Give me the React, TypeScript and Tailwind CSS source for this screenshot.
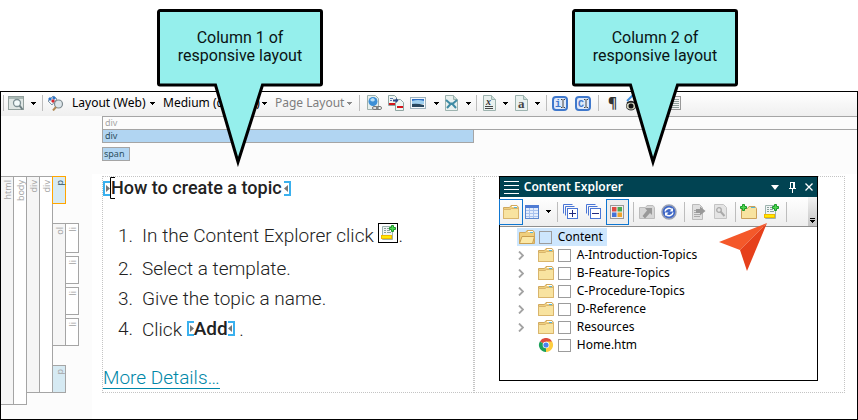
import React from 'react';
import type { ReactNode } from 'react';

const UI = "font-['Noto_Sans','Open_Sans',sans-serif]";

function Caret({ dim = false }: { dim?: boolean }) {
  return (
    <svg width="5" height="3" viewBox="0 0 5 3" className="shrink-0" shapeRendering="crispEdges">
      <path d="M0 0h5v1H4v1H3v1H2V2H1V1H0z" fill={dim ? '#8a8a8a' : '#000'} />
    </svg>
  );
}

function Sep({ className = '' }: { className?: string }) {
  return <span className={`h-4 w-px shrink-0 bg-[#bdbdbd] ${className}`} />;
}

function Tool({ label, className = '', children }: { label: string; className?: string; children: ReactNode }) {
  return (
    <button type="button" aria-label={label} className={`flex shrink-0 items-center justify-center ${className}`}>
      {children}
    </button>
  );
}

function Picker({ label, value, className, dim = false }: { label: string; value: string; className: string; dim?: boolean }) {
  return (
    <label className={`flex h-5 shrink-0 items-center ${className}`}>
      <select
        aria-label={label}
        defaultValue={value}
        disabled={dim}
        className={`min-w-0 grow appearance-none bg-transparent p-0 text-xs opacity-100 ${dim ? 'text-[#7d7d7d]' : 'text-black'}`}
      >
        <option>{value}</option>
      </select>
      <Caret dim={dim} />
    </label>
  );
}

function PageShape({ children }: { children?: ReactNode }) {
  return (
    <svg width="13" height="16" viewBox="0 0 13 16">
      <path d="M.5.500h8l4 4v11H.5z" fill="#e9f1ef" stroke="#9db3af" />
      <path d="M8.500.5v4h4" fill="#c9dcd8" stroke="#9db3af" />
      {children}
    </svg>
  );
}

function CursorBadge({ letter }: { letter: string }) {
  return (
    <svg width="16" height="15" viewBox="0 0 16 15">
      <rect x="1" y="1" width="14" height="13" rx="3" fill="#dfeafa" stroke="#3f78cc" strokeWidth="2" />
      <text x="3" y="11" fontSize="10" fontWeight="700" fill="#3f78cc" fontFamily="Liberation Mono, monospace">
        {letter}
      </text>
      <path d="M9 3.500h1.500m1 0h1.500M11 4v7M9 11.500h1.500m1 0h1.500" stroke="#444" fill="none" />
    </svg>
  );
}

function MainToolbar() {
  return (
    <div className={`flex h-6 items-center overflow-hidden bg-linear-to-b from-white to-[#efefef] pb-[2px] pl-[2px] ${UI}`}>
      <Sep />
      <Tool label="Preview" className="ml-1 gap-[6px]">
        <svg width="17" height="16" viewBox="0 0 17 16">
          <rect x=".5" y="1.500" width="15" height="13" fill="#dfe6e4" stroke="#93a09d" />
          <path d="M1 2h14v2H1z" fill="#a9b8b4" />
          <circle cx="9" cy="8" r="3.500" fill="#f2fafa" stroke="#7d8f93" strokeWidth="1.300" />
          <path d="M11.500 10.500l3 4" stroke="#6e7f83" strokeWidth="2" />
        </svg>
        <Caret />
      </Tool>
      <Sep className="ml-[6px]" />
      <Tool label="Inspect styles" className="ml-1">
        <svg width="17" height="16" viewBox="0 0 17 16">
          <path d="M1 6L6 1l4 3-5 6z" fill="#eef3f8" stroke="#8196a8" />
          <path d="M1 4l2-2 2 2-2 2z" fill="#2e75c8" />
          <path d="M5 3l2-2 2 2-2 2z" fill="#2e75c8" />
          <path d="M4 6l2-2 2 2-2 2z" fill="#d6262b" />
          <circle cx="11.500" cy="9" r="4" fill="#dde6ea" stroke="#7f8b90" strokeWidth="1.200" />
          <path d="M9 12l-3 3.500" stroke="#b08a55" strokeWidth="2" />
        </svg>
      </Tool>
      <Picker label="Layout mode" value="Layout (Web)" className="ml-2 w-[83px]" />
      <Picker label="Medium" value="Medium (default)" className="ml-[8px] w-[104px]" />
      <Picker label="Page layout" value="Page Layout" className="ml-[8px] w-[77px]" dim />
      <Sep className="ml-[7px]" />
      <Tool label="Insert hyperlink" className="ml-[7px]">
        <svg width="15" height="16" viewBox="0 0 15 16">
          <path d="M.5.500h8l3 3v11H.5z" fill="#e6efed" stroke="#9fb0ac" />
          <circle cx="6" cy="6.500" r="4.500" fill="#3c8fd6" />
          <path d="M3 5q3-4 5 0-2 3-5 0" fill="#b9e0f7" />
          <rect x="5.500" y="11.500" width="5" height="3" rx="1.500" fill="#ddd" stroke="#777" />
          <rect x="9.500" y="11.500" width="5" height="3" rx="1.500" fill="none" stroke="#777" />
        </svg>
      </Tool>
      <Tool label="Insert cross-reference" className="ml-[6px]">
        <svg width="16" height="16" viewBox="0 0 16 16">
          <path d="M.5.500h6l2 2v8h-8z" fill="#eef5f3" stroke="#8fa5a2" />
          <path d="M7.500 4.500h5l3 3v8h-8z" fill="#eef5f3" stroke="#8fa5a2" />
          <path d="M2 3.500h3M2 5.500h2" stroke="#5b78ae" />
          <path d="M1 9h6M9 12h6" stroke="#d4151b" strokeWidth="2" />
          <path d="M5 4.500h3V3l2.500 2.500L8 8V6.500H5z" fill="#2f4a8a" />
        </svg>
      </Tool>
      <Tool label="Insert image" className="ml-[6px] gap-2">
        <svg width="16" height="12" viewBox="0 0 16 12">
          <rect x=".5" y=".5" width="15" height="11" fill="#f4f8fb" stroke="#9fb3bd" />
          <path d="M2 2h12v3H2z" fill="#2f6fc4" />
          <path d="M2 4q6-2 12 0v3H2z" fill="#9fd0ef" />
          <path d="M2 7q5-1 12 1v2H2z" fill="#27475f" />
        </svg>
        <Caret />
      </Tool>
      <Tool label="Insert variable" className="ml-[6px] gap-2">
        <PageShape>
          <path d="M1 5l4 3.500h3L12 5M2 13l4-4.500h1l4 4.500" stroke="#3f8ba4" strokeWidth="2" fill="none" />
        </PageShape>
        <Caret />
      </Tool>
      <Sep className="ml-[5px]" />
      <Tool label="Insert snippet" className="ml-[6px] gap-[7px]">
        <PageShape>
          <text x="3" y="10" fontSize="10" fontWeight="700" fontStyle="italic" fill="#333" fontFamily="Liberation Serif, serif">x</text>
          <path d="M2 11.500h8M2 13.500h8" stroke="#444" />
        </PageShape>
        <Caret />
      </Tool>
      <Tool label="Insert character" className="ml-[7px] gap-[7px]">
        <PageShape>
          <text x="3" y="13" fontSize="13" fontWeight="700" fill="#444" fontFamily="Liberation Serif, serif">a</text>
        </PageShape>
        <Caret />
      </Tool>
      <Sep className="ml-[6px]" />
      <Tool label="Insert index marker" className="ml-[5px]"><CursorBadge letter="i" /></Tool>
      <Tool label="Insert concept marker" className="ml-[7px]"><CursorBadge letter="C" /></Tool>
      <Sep className="ml-[7px]" />
      <Tool label="Show marks" className="ml-2 w-[11px] text-sm font-bold text-[#333]">¶</Tool>
      <Tool label="Show tags" className="ml-2">
        <svg width="16" height="16" viewBox="0 0 16 16">
          <path d="M1 6l6-6" stroke="#3d8fe0" strokeWidth="2" />
          <ellipse cx="5" cy="11" rx="5" ry="4" fill="#cfcfbb" stroke="#333" />
          <circle cx="5" cy="11" r="2.500" fill="#111" />
          <path d="M1 8q4-3 8 0" stroke="#222" strokeWidth="1.500" fill="none" />
        </svg>
      </Tool>
      <Tool label="Show list" className="ml-[26px]">
        <svg width="13" height="14" viewBox="0 0 13 14">
          <rect x=".5" y=".5" width="12" height="13" fill="#f4f4f4" stroke="#999" />
          <path d="M2 3.500h9M2 5.500h9M2 7.500h9M2 9.500h9M2 11.500h9" stroke="#8fa09c" />
        </svg>
      </Tool>
    </div>
  );
}

function StructureBars() {
  return (
    <div className={`h-[58px] bg-[#fcfcfc] pl-[101px] text-[9px] leading-3 ${UI}`}>
      <div className="h-[13px] border-t border-l border-[#a5a5a5] pl-[2px] text-[#a5a5a5]">div</div>
      <div className="border-t border-[#a5a5a5]">
        <div className="h-[13px] w-1/2 max-w-[372px] border-r border-b border-l border-[#a5a5a5] bg-[#b1d5f2] pl-[2px] text-[#2d5061]">div</div>
      </div>
      <div className="mt-1 h-[14px] w-7 border border-[#a5a5a5] bg-[#b1d5f2] pl-px text-[#2d5061]">span</div>
    </div>
  );
}

function VText({ children }: { children: ReactNode }) {
  return <span className="block rotate-180 text-right [writing-mode:vertical-rl]">{children}</span>;
}

const railBox = 'flex items-start justify-center border-[#a5a5a5] pt-[3px]';

function StructureRail() {
  return (
    <div className={`flex w-[91px] shrink-0 items-start bg-[#fcfcfc] pt-[2px] text-[9px] leading-[11px] text-[#a5a5a5] ${UI}`}>
      <div className={`${railBox} h-[229px] w-[13px] border-y border-r bg-[#f6f6f6]`}><VText>html</VText></div>
      <div className={`${railBox} h-[229px] w-[13px] border-y border-r bg-white`}><VText>body</VText></div>
      <div className={`${railBox} h-[217px] w-[13px] border-y border-r bg-[#f6f6f6]`}><VText>div</VText></div>
      <div className={`${railBox} h-[217px] w-[13px] border-y border-r bg-white`}><VText>div</VText></div>
      <div className="-ml-px flex flex-col items-start">
        <div className="flex h-7 w-[14px] items-start justify-center border border-[#ffa500] bg-[#d6eaf3] pt-[3px] text-[#2d5061]"><VText>p</VText></div>
        <div className="mt-[19px] flex">
          <div className={`${railBox} h-[123px] w-[14px] border bg-[#f6f6f6]`}><VText>ol</VText></div>
          <div className="-ml-px flex flex-col gap-[3px]">
            <div className={`${railBox} h-[30px] w-[14px] border bg-white`}><VText>li</VText></div>
            <div className={`${railBox} h-7 w-[14px] border bg-white`}><VText>li</VText></div>
            <div className={`${railBox} h-7 w-[14px] border bg-white`}><VText>li</VText></div>
            <div className={`${railBox} h-7 w-[14px] border bg-white`}><VText>li</VText></div>
          </div>
        </div>
        <div className={`${railBox} mt-[19px] h-7 w-[14px] border bg-[#d6eaf3]`}><VText>p</VText></div>
      </div>
    </div>
  );
}

function Marker({ side }: { side: 'open' | 'close' }) {
  return (
    <svg width="7" height="15" viewBox="0 0 7 15" className="shrink-0">
      {side === 'open' ? (
        <>
          <path d="M7 1H1v13h6" fill="none" stroke="#3ab0ee" strokeWidth="2" />
          <path d="M3 4l4 3.500L3 11z" fill="#777" />
        </>
      ) : (
        <>
          <path d="M0 1h6v13H0" fill="none" stroke="#3ab0ee" strokeWidth="2" />
          <path d="M4 4L0 7.500 4 11z" fill="#777" />
        </>
      )}
    </svg>
  );
}

function NewTopicIcon() {
  return (
    <svg width="16" height="16" viewBox="0 0 16 16">
      <path d="M2.500 1.500h10v13h-10z" fill="#f0f5f4" stroke="#9db3af" />
      <path d="M4 3.500h2m1 0h2M4 5.500h2m1 0h3M4 7.500h2m1 0h4" stroke="#8aa09c" />
      <rect x="1.500" y="10.500" width="10" height="3" fill="#ffe900" stroke="#f0b800" />
      <path d="M11.500.5h2v2h2v2h-2v2h-2v-2h-2v-2h2z" fill="#4fd64f" stroke="#1c9a2b" />
    </svg>
  );
}

function Step({ n, children }: { n: number; children: ReactNode }) {
  return (
    <li className="flex h-[30px] whitespace-nowrap first:h-[34px] first:pt-px">
      <span className="w-6 shrink-0">{n}.</span>
      <span>{children}</span>
    </li>
  );
}

function TopicColumn() {
  return (
    <section className="h-[217px] overflow-hidden border border-dotted border-[#c4c4c4] font-['Roboto',sans-serif] text-[#222]">
      <h1 className="flex h-[22px] items-center text-[18px] leading-[22px] font-medium whitespace-nowrap">
        <Marker side="open" />
        <svg width="5" height="22" viewBox="0 0 5 22" className="-mr-[4px] shrink-0">
          <path d="M5 .5H.5v21H5" fill="none" stroke="#000" />
        </svg>
        How to create a topic
        <span className="ml-[2px]"><Marker side="close" /></span>
      </h1>
      <ol className="mt-[21px] pl-[15px] text-[19px] leading-[30px] font-light">
        <Step n={1}>
          In the Content Explorer click{' '}
          <span className="inline-block border border-black bg-white p-px align-[-1px] leading-none"><NewTopicIcon /></span>.
        </Step>
        <Step n={2}>Select a template.</Step>
        <Step n={3}>Give the topic a name.</Step>
        <Step n={4}>
          Click{' '}
          <span className="inline-flex items-center leading-[29px] font-medium"><Marker side="open" />Add<Marker side="close" /></span>{' '}.
        </Step>
      </ol>
      <p className="mt-[21px] text-[19px] leading-[25px] font-light">
        <a href="#details" className="inline-block h-6 border-b border-[#0087a8] text-[#0087a8]">More Details…</a>
      </p>
    </section>
  );
}

function Folder({ open = false }: { open?: boolean }) {
  return (
    <svg width="16" height="14" viewBox="0 0 16 14" className="shrink-0">
      <path d="M.5 13.500v-11h6l1.500-2h6l1.500 2v11z" fill="#efcf7e" stroke="#d0a85e" />
      <path d="M9 1.500h5" stroke="#fff" />
      <path d="M11 2.500h3" stroke="#54b5d8" />
      {open ? (
        <path d="M.5 13.500L3 6.500h12.500l-2 7z" fill="#fbe8a6" stroke="#c99f50" />
      ) : (
        <path d="M.5 13.500v-9h6.500l1.500-1h7v10z" fill="#f8e3a0" stroke="#d9b56c" />
      )}
    </svg>
  );
}

function Stack({ plus }: { plus: boolean }) {
  return (
    <svg width="15" height="15" viewBox="0 0 15 15">
      <path d="M.5 9.500v-9h9M2.500 11.500v-9h9" fill="none" stroke="#4a76d6" />
      <rect x="4.500" y="4.500" width="10" height="10" fill="#fff" stroke="#4a76d6" />
      <path d={plus ? 'M6 9.500h7M9.500 6v7' : 'M6 9.500h7'} stroke="#222a80" />
    </svg>
  );
}

function ExplorerToolbar() {
  return (
    <div className="flex h-[30px] items-center border-b border-[#8f8f8f] bg-linear-to-b from-white to-[#eee]">
      <Tool label="Show folders" className="-ml-px h-[26px] w-6 border border-[#0f76d0]"><Folder /></Tool>
      <Tool label="View" className="ml-[2px] gap-[7px]">
        <svg width="14" height="14" viewBox="0 0 14 14">
          <rect x=".5" y=".5" width="13" height="13" fill="#e4edfc" stroke="#5b86cf" />
          <path d="M0 0h14v3H0z" fill="#4f7cd4" />
          <path d="M1 5.500h12M1 8.500h12M1 11.500h12M4.500 3v10M8.500 3v10" stroke="#a9c2ee" />
        </svg>
        <Caret />
      </Tool>
      <Sep className="ml-[6px] h-5" />
      <Tool label="Expand all" className="ml-[5px]"><Stack plus /></Tool>
      <Tool label="Collapse all" className="ml-2"><Stack plus={false} /></Tool>
      <Tool label="Show files" className="ml-[5px] h-[26px] w-[23px] border border-[#0f76d0] bg-[#eeeeee]">
        <svg width="14" height="14" viewBox="0 0 14 14">
          <rect x=".5" y=".5" width="13" height="13" fill="#efefef" stroke="#999" />
          <path d="M2 2h4.500v4.500H2z" fill="#dd4b42" />
          <path d="M7.500 2H12v4.500H7.500z" fill="#4aa84f" />
          <path d="M2 7.500h4.500V12H2z" fill="#4472d6" />
          <path d="M7.500 7.500H12V12H7.500z" fill="#efa42c" />
        </svg>
      </Tool>
      <Sep className="ml-1 h-5" />
      <Tool label="Move up" className="ml-[5px]">
        <svg width="16" height="14" viewBox="0 0 16 14">
          <path d="M.5 13.500v-11h6l1.500-2h6l1.500 2v11z" fill="#d6d6d6" stroke="#bcbcbc" />
          <path d="M6 3h7v7l-2-2-5 5.500L3.500 11 8 5.500z" fill="#999" />
        </svg>
      </Tool>
      <Tool label="Refresh" className="ml-[6px]">
        <svg width="16" height="16" viewBox="0 0 16 16">
          <circle cx="8" cy="8" r="7" fill="#3f68c8" stroke="#98a0b4" strokeWidth="1.500" />
          <path d="M4 7.500C4.500 4.500 8.500 3 11 5.500M12 8.500c-.5 3-4.500 4.500-7 2" fill="none" stroke="#fff" strokeWidth="1.500" />
          <path d="M12 4v3.500H8.500zM4 12V8.500h3.500z" fill="#fff" />
        </svg>
      </Tool>
      <Sep className="ml-[7px] h-5" />
      <Tool label="Open" className="ml-[6px]">
        <svg width="15" height="16" viewBox="0 0 15 16">
          <path d="M1.500.500h7l3 3v12h-10z" fill="#e0e0e0" stroke="#bbb" />
          <path d="M3 6.500h6M3 8.500h6M3 10.500h6M3 12.500h6" stroke="#aaa" />
          <path d="M5 5h4V2.500L14.500 7 9 11.500V9H5z" fill="#999" />
        </svg>
      </Tool>
      <Tool label="Properties" className="ml-2">
        <svg width="13" height="15" viewBox="0 0 13 15">
          <path d="M.5.500h9l3 3v11H.5z" fill="#e4e4e4" stroke="#c4c4c4" />
          <circle cx="5" cy="6" r="2.300" fill="none" stroke="#aaa" strokeWidth="1.300" />
          <path d="M6.500 7.500l4 4.500" stroke="#aaa" strokeWidth="2" />
        </svg>
      </Tool>
      <Sep className="ml-[8px] h-5" />
      <Tool label="New folder" className="ml-1">
        <svg width="17" height="16" viewBox="0 0 17 16">
          <path d="M1.500 14.500v-10h6l1.500-2h6l1.500 2v10z" fill="#f8e3a0" stroke="#cba05a" />
          <path d="M11 3.500h4" stroke="#54b5d8" />
          <path d="M2.500.5h2v2h2v2h-2v2h-2v-2h-2v-2h2z" fill="#4fd64f" stroke="#1c9a2b" />
        </svg>
      </Tool>
      <Tool label="New topic" className="ml-[6px]"><NewTopicIcon /></Tool>
      <Sep className="ml-[7px] h-5" />
      <button type="button" aria-label="More tools" className="ml-auto flex h-full w-[9px] flex-col items-center justify-end gap-px bg-linear-to-b from-[#f3f3f3] to-[#c4c4c4] pb-[3px]">
        <span className="h-px w-[5px] bg-black" />
        <Caret />
      </button>
    </div>
  );
}

function TreeCheck({ name }: { name: string }) {
  return (
    <label className="flex items-center gap-[6px] whitespace-nowrap">
      <input type="checkbox" className="size-[13px] shrink-0 appearance-none border border-[#9c9c9c] bg-transparent" />
      {name}
    </label>
  );
}

function Chrome() {
  return (
    <svg width="16" height="14" viewBox="0 0 14 14" className="shrink-0">
      <path d="M7 7L.9 3.500A7 7 0 0 1 13.100 3.500z" fill="#dd4b3e" />
      <path d="M7 7L.9 3.500A7 7 0 0 0 7 14z" fill="#1ba05a" />
      <path d="M7 7h0V14A7 7 0 0 0 13.100 3.500H7z" fill="#fdcd40" />
      <circle cx="7" cy="7" r="3.300" fill="#fff" />
      <circle cx="7" cy="7" r="2.600" fill="#4a83ee" />
    </svg>
  );
}

const folders = ['A-Introduction-Topics', 'B-Feature-Topics', 'C-Procedure-Topics', 'D-Reference', 'Resources'];

function Explorer() {
  return (
    <div className={`relative h-[205px] w-[319px] border border-black bg-white text-xs text-black ${UI}`}>
      <header className="flex h-5 items-center bg-[#014352] pr-1 pl-1 text-white">
        <svg width="15" height="13" viewBox="0 0 15 13" shapeRendering="crispEdges">
          <path d="M0 .5h15M0 4.500h15M0 8.500h15M0 12.500h15" stroke="#fff" />
        </svg>
        <h2 className="ml-[5px] grow leading-5 font-semibold whitespace-nowrap">Content Explorer</h2>
        <Tool label="Window menu">
          <svg width="8" height="5" viewBox="0 0 8 5"><path d="M0 0h8L4 5z" fill="#fff" /></svg>
        </Tool>
        <Tool label="Pin" className="ml-[10px]">
          <svg width="7" height="11" viewBox="0 0 7 11" shapeRendering="crispEdges">
            <path d="M1.500 6.500v-6h4v6M4.500 0v6M0 6.500h7M3.500 7v4" stroke="#fff" fill="none" />
          </svg>
        </Tool>
        <Tool label="Close" className="ml-[9px]">
          <svg width="8" height="8" viewBox="0 0 8 8"><path d="M.5.500l7 7m0-7l-7 7" stroke="#fff" strokeWidth="1.300" /></svg>
        </Tool>
      </header>
      <ExplorerToolbar />
      <ul className="mt-px leading-[18px]">
        <li className="ml-[17px] flex h-[18px] w-[90px] items-center gap-1 bg-[#cde6fd] pl-[2px]">
          <Folder open />
          <TreeCheck name="Content" />
        </li>
        {folders.map((name) => (
          <li key={name} className="flex h-[18px] items-center gap-1 pl-[18px]">
            <button type="button" aria-label={`Expand ${name}`} className="mr-[10px]">
              <svg width="6" height="9" viewBox="0 0 6 9"><path d="M1 .5l4 4-4 4" fill="none" stroke="#a3a3a3" strokeWidth="1.800" /></svg>
            </button>
            <Folder />
            <TreeCheck name={name} />
          </li>
        ))}
        <li className="flex h-[18px] items-center gap-1 pl-[38px]">
          <Chrome />
          <TreeCheck name="Home.htm" />
        </li>
      </ul>
      <svg width="48" height="48" viewBox="0 0 48 48" className="absolute top-[46px] left-[219px]">
        <path d="M0 19L48 0 21 27z" fill="#f4582a" />
        <path d="M48 0L28 48 21 27z" fill="#e6401b" />
      </svg>
    </div>
  );
}

function Callout({ className, lines }: { className: string; lines: [string, string] }) {
  return (
    <div className={`absolute h-[158px] w-[166px] ${className}`}>
      <svg width="166" height="158" viewBox="0 0 166 158" className="absolute inset-0">
        <path
          d="M3 1.500H163a1.500 1.500 0 0 1 1.500 1.500V74.500a1.500 1.500 0 0 1-1.500 1.500H105.500L81 153 58.500 76H3A1.500 1.500 0 0 1 1.500 74.500V3A1.500 1.500 0 0 1 3 1.500z"
          fill="#95efec"
          stroke="#000"
          strokeWidth="3"
        />
      </svg>
      <p className="relative pt-[20px] text-center font-['Roboto',sans-serif] text-[16px] leading-[18px] text-[#0a1414]">
        {lines[0]}
        <br />
        {lines[1]}
      </p>
    </div>
  );
}

export default function App() {
  return (
    <main className="relative bg-white pt-[91px]">
      <div className="border border-black bg-white">
        <MainToolbar />
        <StructureBars />
        <div className="flex min-h-[245px]">
          <StructureRail />
          <div className="grid grow grid-cols-2 items-start pt-[2px] pr-3 pl-[10px]">
            <TopicColumn />
            <section className="flex h-[217px] justify-center border border-dotted border-[#c4c4c4] pr-[2px]">
              <div className="-mt-px"><Explorer /></div>
            </section>
          </div>
        </div>
      </div>
      <Callout className="top-[9px] left-[157px]" lines={['Column 1 of', 'responsive layout']} />
      <Callout className="top-[9px] left-[572px]" lines={['Column 2 of', 'responsive layout']} />
    </main>
  );
}
